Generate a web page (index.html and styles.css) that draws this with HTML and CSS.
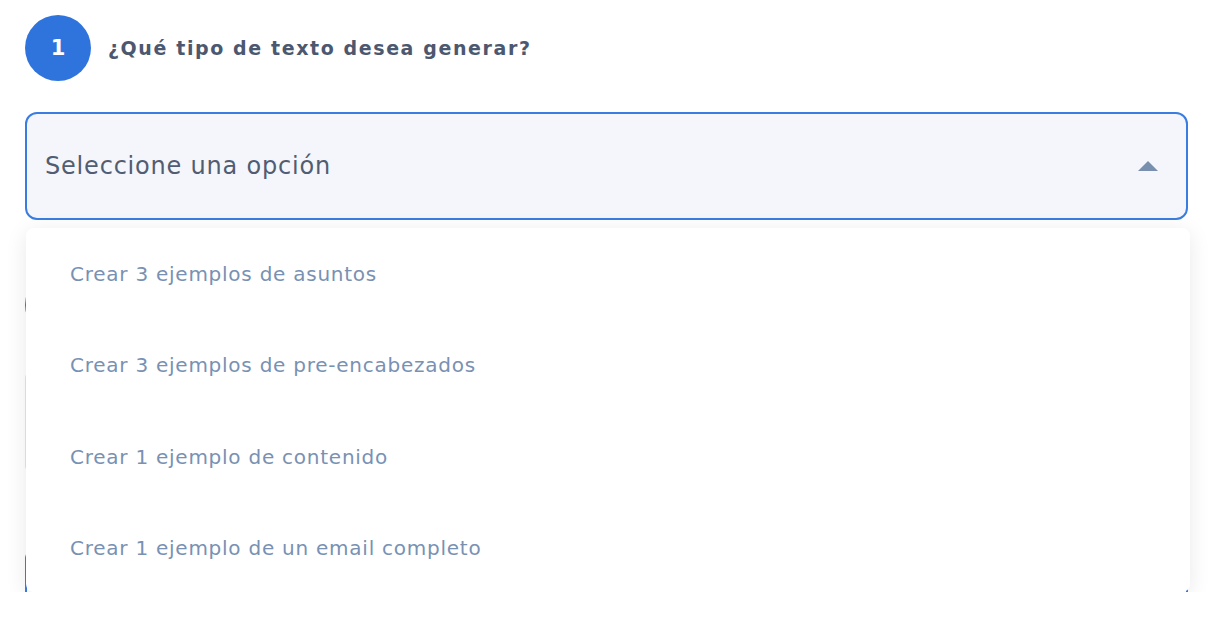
FILE: index.html
```html
<!DOCTYPE html>
<html lang="es">
<head>
<meta charset="utf-8">
<title>Generador de texto</title>
<link rel="stylesheet" href="styles.css">
</head>
<body>
<div class="page">
  <div class="step">
    <div class="step-head">
      <div class="badge">1</div>
      <h2 class="step-title">¿Qué tipo de texto desea generar?</h2>
    </div>
    <div class="select-wrap">
      <div class="select">
        <span class="select-value">Seleccione una opción</span>
        <svg class="caret" width="20" height="10" viewBox="0 0 20 10"><path d="M0 10 L10 0 L20 10 Z" fill="#7890ae"/></svg>
      </div>
      <ul class="menu">
        <li class="menu-item">Crear 3 ejemplos de asuntos</li>
        <li class="menu-item">Crear 3 ejemplos de pre-encabezados</li>
        <li class="menu-item">Crear 1 ejemplo de contenido</li>
        <li class="menu-item">Crear 1 ejemplo de un email completo</li>
      </ul>
    </div>
  </div>
  <div class="step step-two">
    <div class="step-head">
      <div class="badge">2</div>
      <h2 class="step-title">Describa su producto</h2>
    </div>
    <div class="textarea"></div>
    <div class="input-blue"></div>
  </div>
</div>
</body>
</html>
```

FILE: styles.css
```css
* { box-sizing: border-box; }
html, body { margin: 0; padding: 0; background: #ffffff; }
body { font-family: "DejaVu Sans", "Open Sans", sans-serif; }

.page {
  height: 592px;
  overflow: hidden;
  padding: 15px 20px 0 25px;
  background: #ffffff;
}

.step-head {
  display: flex;
  align-items: center;
  gap: 17px;
}

.badge {
  width: 66px;
  height: 66px;
  border-radius: 50%;
  background: #2f74dc;
  color: #ffffff;
  display: flex;
  align-items: center;
  justify-content: center;
  font-size: 21px;
  font-weight: bold;
  flex: none;
}

.step-title {
  margin: 0;
  font-size: 19px;
  font-weight: bold;
  letter-spacing: 1.6px;
  color: #4b5870;
}

.select-wrap {
  position: relative;
  margin-top: 31px;
}

.select {
  height: 108px;
  width: 1163px;
  border: 2px solid #3a7de0;
  border-radius: 12px;
  background: #f5f6fb;
  display: flex;
  align-items: center;
  justify-content: space-between;
  padding: 0 28px 0 18px;
}

.select-value {
  font-size: 24px;
  letter-spacing: 0.8px;
  color: #515d72;
}

.caret { display: block; }

.menu {
  position: absolute;
  z-index: 5;
  top: 116px;
  left: 1px;
  width: 1164px;
  height: 364px;
  margin: 0;
  padding: 0;
  list-style: none;
  background: #ffffff;
  border-radius: 8px;
  box-shadow: 0 4px 22px rgba(0, 0, 0, 0.09);
}

.menu-item {
  height: 91.5px;
  display: flex;
  align-items: center;
  padding-left: 44px;
  font-size: 20px;
  letter-spacing: 0.75px;
  color: #7891b3;
}

.step-two { margin-top: 52px; }

.textarea {
  margin-top: 34px;
  height: 100px;
  width: 1163px;
  border: 1px solid #e3e5ea;
  border-radius: 6px;
}

.input-blue {
  margin-top: 75px;
  height: 60px;
  width: 1163px;
  border: 2px solid #3a7de0;
  border-radius: 12px;
}
```
